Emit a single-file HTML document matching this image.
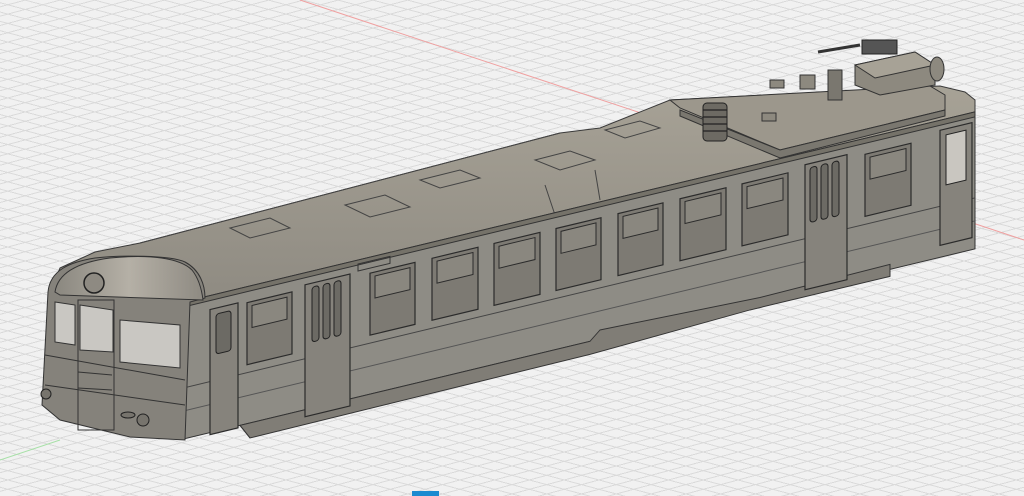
<!DOCTYPE html>
<html><head><meta charset="utf-8"><style>
html,body{margin:0;padding:0}
body{width:1024px;height:496px;overflow:hidden;position:relative;background:#f1f1f1;
background-image:repeating-linear-gradient(15deg,transparent 0 8px,#dadada 8px 9px),repeating-linear-gradient(-15deg,transparent 0 8px,#dadada 8px 9px);}
svg{position:absolute;left:0;top:0}
</style></head><body>
<svg width="1024" height="496" viewBox="0 0 1024 496">
<defs>
<linearGradient id="roof" x1="0" y1="0" x2="0" y2="1">
<stop offset="0" stop-color="#a7a296"/><stop offset="1" stop-color="#8f8b82"/></linearGradient>
<linearGradient id="cab" x1="0" y1="0" x2="1" y2="0">
<stop offset="0" stop-color="#8a877f"/><stop offset="0.5" stop-color="#b5b0a6"/><stop offset="1" stop-color="#8e8a82"/></linearGradient>
</defs>
<line x1="300" y1="0" x2="1024" y2="240" stroke="#f0a0a0" stroke-width="1"/>
<line x1="0" y1="460" x2="60" y2="440" stroke="#a8e0a8" stroke-width="1"/>
<rect x="412" y="491" width="27" height="5" fill="#1a8ad0"/>

<polygon points="60,268 95,252 140,243 560,133 600,128 670,100 940,86 965,92 975,100 975,115 205,298 185,292 50,292" fill="url(#roof)" stroke="#3a3a3a" stroke-width="1"/>
<g fill="none" stroke="#444" stroke-width="1">
<polygon points="230,228 270,218 290,228 250,238"/>
<polygon points="345,205 385,195 410,207 370,217"/>
<polygon points="420,180 460,170 480,178 440,188"/>
<polygon points="535,160 570,151 595,160 560,170"/>
<polygon points="605,130 640,121 660,128 625,138"/>
<line x1="140" y1="243" x2="560" y2="133"/>
<line x1="545" y1="185" x2="555" y2="215"/>
<line x1="595" y1="170" x2="600" y2="200"/>
</g>
<polygon points="670,100 930,86 945,95 945,110 780,150 680,108" fill="#9c978c" stroke="#333"/>
<polygon points="680,110 780,150 945,110 945,116 780,158 680,116" fill="#7a776f" stroke="#333"/>
<rect x="703" y="103" width="24" height="38" rx="4" fill="#6d6a63" stroke="#222"/>
<g stroke="#222" stroke-width="1.3"><line x1="703" y1="110" x2="727" y2="110"/><line x1="703" y1="117" x2="727" y2="117"/><line x1="703" y1="124" x2="727" y2="124"/><line x1="703" y1="131" x2="727" y2="131"/></g>
<polygon points="855,65 915,52 935,65 935,85 880,95 855,85" fill="#8d897f" stroke="#333"/>
<polygon points="855,65 915,52 935,65 875,78" fill="#a7a296" stroke="#333"/>
<rect x="828" y="70" width="14" height="30" fill="#7a776f" stroke="#333"/>
<rect x="800" y="75" width="15" height="14" fill="#8d897f" stroke="#333"/>
<rect x="770" y="80" width="14" height="8" fill="#8d897f" stroke="#333"/>
<rect x="762" y="113" width="14" height="8" fill="#8d897f" stroke="#333"/>
<line x1="818" y1="52" x2="860" y2="45" stroke="#333" stroke-width="3"/>
<rect x="862" y="40" width="35" height="14" fill="#555" stroke="#222"/>
<ellipse cx="937" cy="69" rx="7" ry="12" fill="#8d897f" stroke="#333"/>

<g transform="skewY(-13.5)">
<rect x="185" y="346" width="790" height="137" fill="#8e8c85" stroke="#333"/>
<rect x="185" y="346" width="790" height="5" fill="#757269" stroke="#333"/>
<polygon points="240,483 590,483 600,474 760,480 890,478 890,490 750,490 590,496 250,498" fill="#807d76" stroke="#333"/>
<line x1="185" y1="432" x2="975" y2="432" stroke="#444"/>
<line x1="185" y1="455" x2="975" y2="455" stroke="#555"/>
<g fill="#7d7a73" stroke="#2b2b2b" stroke-width="1.2">
<rect x="247" y="362" width="45" height="62"/><rect x="370" y="362" width="45" height="62"/>
<rect x="432" y="362" width="46" height="62"/><rect x="494" y="362" width="46" height="62"/>
<rect x="556" y="362" width="45" height="62"/><rect x="618" y="362" width="45" height="62"/>
<rect x="680" y="362" width="46" height="62"/><rect x="742" y="362" width="46" height="62"/>
<rect x="865" y="362" width="46" height="62"/>
</g>
<g fill="#8a877f" stroke="#2b2b2b">
<rect x="252" y="366" width="35" height="22"/><rect x="375" y="366" width="35" height="22"/>
<rect x="437" y="366" width="36" height="22"/><rect x="499" y="366" width="36" height="22"/>
<rect x="561" y="366" width="35" height="22"/><rect x="623" y="366" width="35" height="22"/>
<rect x="685" y="366" width="36" height="22"/><rect x="747" y="366" width="36" height="22"/>
<rect x="870" y="366" width="36" height="22"/>
</g>
<g fill="#86837c" stroke="#2b2b2b" stroke-width="1.2">
<rect x="305" y="358" width="45" height="132"/><rect x="805" y="358" width="42" height="125"/>
<rect x="210" y="360" width="28" height="125"/><rect x="940" y="356" width="32" height="115"/>
</g>
<g fill="#6c6a64" stroke="#222">
<rect x="312" y="362" width="7" height="55" rx="3"/><rect x="323" y="362" width="7" height="55" rx="3"/><rect x="334" y="362" width="7" height="55" rx="3"/>
<rect x="810" y="362" width="7" height="55" rx="3"/><rect x="821" y="362" width="7" height="55" rx="3"/><rect x="832" y="362" width="7" height="55" rx="3"/>
<rect x="216" y="366" width="15" height="40" rx="3"/><rect x="946" y="362" width="20" height="50" fill="#c9c6c0"/>
</g>
<rect x="358" y="350" width="32" height="7" fill="none" stroke="#333"/>
</g>

<path d="M48,292 C50,270 70,262 95,258 C120,255 170,255 185,262 C200,270 205,285 205,298 L190,302 L185,440 L130,437 L60,420 L42,405 Z" fill="#85827b" stroke="#333"/>
<path d="M55,292 C58,272 80,262 110,258 C150,254 180,258 192,270 C200,280 202,292 203,300 L60,295 Z" fill="url(#cab)" stroke="#333"/>
<circle cx="94" cy="283" r="10" fill="#8e8a82" stroke="#222" stroke-width="1.5"/>
<g fill="#c9c7c2" stroke="#333">
<polygon points="55,302 75,305 75,345 55,342"/>
<polygon points="80,305 113,310 113,352 80,350"/>
<polygon points="120,320 180,325 180,368 120,362"/>
</g>
<g fill="none" stroke="#333">
<line x1="45" y1="355" x2="185" y2="380"/><line x1="45" y1="385" x2="185" y2="405"/>
<rect x="78" y="300" width="36" height="130"/>
<line x1="78" y1="372" x2="112" y2="375"/><line x1="78" y1="388" x2="112" y2="390"/>
</g>
<ellipse cx="46" cy="394" rx="5" ry="5" fill="#77746d" stroke="#222"/>
<ellipse cx="143" cy="420" rx="6" ry="6" fill="#77746d" stroke="#222"/>
<ellipse cx="128" cy="415" rx="7" ry="3" fill="#77746d" stroke="#222"/>
</svg>
</body></html>
